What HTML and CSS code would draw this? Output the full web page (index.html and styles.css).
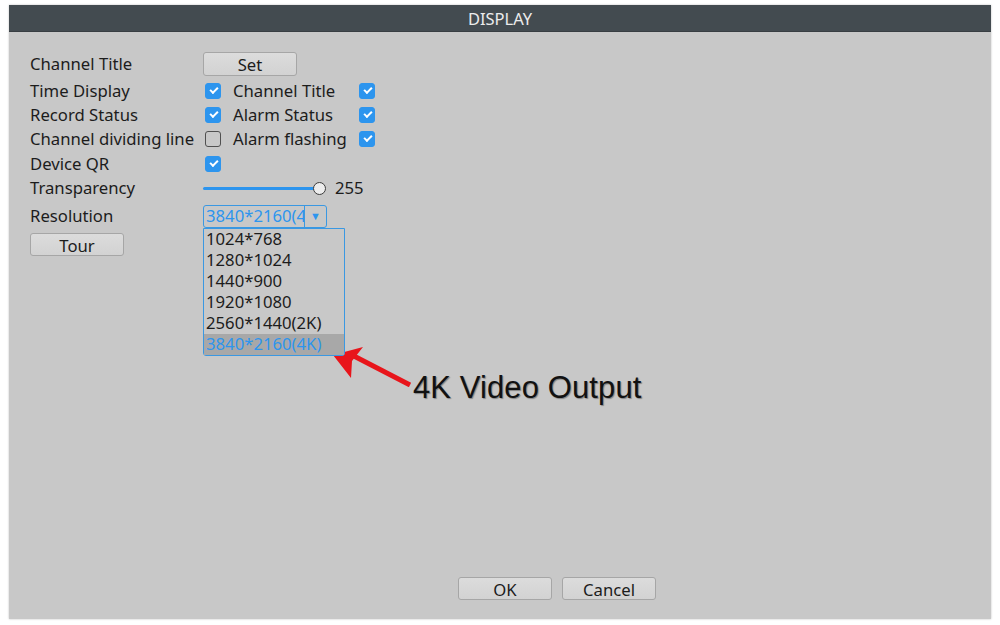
FILE: index.html
```html
<!DOCTYPE html>
<html lang="en">
<head>
  <meta charset="UTF-8" />
  <title>Display</title>
  <link rel="stylesheet" href="styles.css">
</head>
<body>
  <div class="window">
    <div class="title-bar">DISPLAY</div>

    <div class="content">
      <div class="row row-set">
        <span class="label">Channel Title</span>
        <button class="btn">Set</button>
      </div>

      <div class="row row-first">
        <span class="label">Time Display</span>
        <span class="check on"></span>
        <span class="label-2">Channel Title</span>
        <span class="check on"></span>
      </div>
      <div class="row">
        <span class="label">Record Status</span>
        <span class="check on"></span>
        <span class="label-2">Alarm Status</span>
        <span class="check on"></span>
      </div>
      <div class="row">
        <span class="label">Channel dividing line</span>
        <span class="check"></span>
        <span class="label-2">Alarm flashing</span>
        <span class="check on"></span>
      </div>
      <div class="row row-qr">
        <span class="label">Device QR</span>
        <span class="check on"></span>
      </div>
      <div class="row">
        <span class="label">Transparency</span>
        <div class="slider">
          <div class="track"></div>
          <div class="knob"></div>
        </div>
        <span class="slider-value">255</span>
      </div>

      <div class="row row-res">
        <span class="label">Resolution</span>
        <div class="select">
          <span class="select-text">3840*2160(4K)</span>
          <span class="select-arrow">▼</span>
          <ul class="dropdown">
            <li>1024*768</li>
            <li>1280*1024</li>
            <li>1440*900</li>
            <li>1920*1080</li>
            <li>2560*1440(2K)</li>
            <li class="selected">3840*2160(4K)</li>
          </ul>
        </div>
      </div>

      <div class="row row-tour">
        <button class="btn">Tour</button>
      </div>

      <div class="footer">
        <button class="btn">OK</button>
        <button class="btn">Cancel</button>
      </div>
    </div>

    <div class="note">
      <svg class="note-arrow" width="90" height="50" viewBox="0 0 90 50">
        <line x1="17" y1="17" x2="77" y2="48" stroke="#e8151b" stroke-width="5" />
        <polygon points="0,18 30,10 19,24 18,41" fill="#e8151b" />
      </svg>
      <span class="note-text">4K Video Output</span>
    </div>
  </div>
</body>
</html>
```

FILE: styles.css
```css
* {
  box-sizing: border-box;
  margin: 0;
  padding: 0;
}

body {
  background: #ffffff;
  font-family: 'Noto Sans', sans-serif;
  color: #1c1c1c;
}

.window {
  position: relative;
  margin: 5px 9px;
  width: 982px;
  height: 614px;
  background: #c8c8c8;
  box-shadow: 0 0 2px rgba(0,0,0,0.25);
  display: flex;
  flex-direction: column;
}

.title-bar {
  height: 27px;
  background: #434b50;
  border-bottom: 1px solid #383e42;
  color: #ececec;
  font-size: 16.5px;
  line-height: 27px;
  text-align: center;
}

.content {
  flex: 1;
  display: flex;
  flex-direction: column;
  padding: 20px 20px 19px 21px;
}

.row {
  display: flex;
  align-items: center;
  height: 24px;
  font-size: 16.7px;
}

.label,
.label-2,
.slider-value {
  padding-bottom: 2px;
}

.row-first {
  margin-top: 3px;
}

.row-qr {
  margin-top: 1px;
}

.label {
  width: 173px;
  white-space: nowrap;
}

.label-2 {
  width: 124px;
  white-space: nowrap;
}

.btn {
  width: 94px;
  height: 24px;
  padding-bottom: 1px;
  background: linear-gradient(#dcdcdc, #d2d2d2);
  border: 1px solid #a6a6a6;
  border-radius: 3px;
  font-family: 'Noto Sans', sans-serif;
  font-size: 16.7px;
  color: #1c1c1c;
}

.check {
  width: 16px;
  height: 16px;
  margin-left: 2px;
  margin-right: 12px;
  border: 1px solid #505050;
  border-radius: 3px;
  position: relative;
}

.check.on {
  background: #2d95ee;
  border-color: #2d95ee;
}

.check.on::after {
  content: "";
  position: absolute;
  left: 4px;
  top: 3px;
  width: 6px;
  height: 3px;
  border-left: 2px solid #fff;
  border-bottom: 2px solid #fff;
  transform: rotate(-45deg);
}

.slider {
  position: relative;
  width: 124px;
  height: 14px;
  margin-right: 8px;
  display: flex;
  align-items: center;
}

.track {
  width: 112px;
  height: 3px;
  background: #2d95ee;
  border-radius: 2px;
}

.knob {
  width: 13px;
  height: 13px;
  margin-left: -2px;
  border-radius: 50%;
  background: #ededed;
  border: 1px solid #3c3c3c;
}

.row-res {
  height: 23px;
  margin-top: 5px;
}

.select {
  position: relative;
  width: 124px;
  height: 23px;
  display: flex;
  border: 1px solid #3a98e2;
  border-radius: 3px;
  color: #2d95ee;
}

.select-text {
  width: 101px;
  overflow: hidden;
  white-space: nowrap;
  padding-left: 2px;
  line-height: 20px;
  border-right: 1px solid #3a98e2;
}

.select-arrow {
  flex: 1;
  text-align: center;
  font-size: 11px;
  line-height: 20px;
}

.dropdown {
  position: absolute;
  left: -1px;
  top: 22px;
  width: 142px;
  list-style: none;
  border: 1px solid #3a98e2;
  border-radius: 0 0 3px 3px;
  background: #c8c8c8;
  color: #1c1c1c;
  z-index: 2;
}

.dropdown li {
  height: 21px;
  line-height: 20px;
  padding-left: 2px;
}

.dropdown li.selected {
  background: #a8a8a8;
  color: #2d95ee;
}

.row-tour {
  height: 23px;
  margin-top: 5px;
}

.row-tour .btn {
  height: 23px;
}

.footer {
  margin-top: auto;
  display: flex;
  justify-content: flex-end;
  gap: 10px;
  padding-right: 315px;
}

.footer .btn {
  height: 23px;
}

.note {
  position: absolute;
  left: 324px;
  top: 329px;
  display: flex;
  align-items: flex-start;
}

.note-arrow {
  margin-top: 3px;
}

.note-text {
  margin-left: -10px;
  margin-top: 36px;
  font-family: 'Liberation Sans', Arial, sans-serif;
  font-size: 31px;
  letter-spacing: 0.1px;
  color: #111;
  text-shadow: 1px 1px 1px rgba(0,0,0,0.35);
}
```
